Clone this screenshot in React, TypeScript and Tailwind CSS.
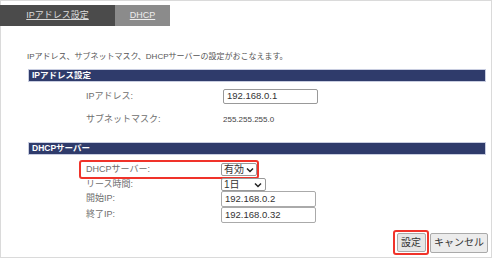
import React from 'react';

const Chevron: React.FC = () => (
  <svg width="8" height="6" viewBox="0 0 8 6" className="shrink-0">
    <path d="M1 1.5 L4 4.5 L7 1.5" fill="none" stroke="#222" strokeWidth="1.5" />
  </svg>
);

const SectionBar: React.FC<{ title: string }> = ({ title }) => (
  <div className="ml-[27px] w-[458px] h-[13px] bg-[#2f3b6b] border border-[#c8cde0] flex items-center pl-[3px] text-white text-[8.5px] font-bold leading-none">
    {title}
  </div>
);

const App: React.FC = () => {
  return (
    <div className="w-[500px] h-[259px] bg-white text-[#6e6e6e] font-['Liberation_Sans','Noto_Sans_CJK_JP',sans-serif] overflow-hidden">
      <div className="w-[492px] h-[258px] border border-[#dadada] pt-[4px]">
        {/* tabs */}
        <div className="flex h-[21px] -ml-px">
          <div className="w-[115px] bg-[#4b4b4b] flex items-center justify-center text-[#dcdcdc] text-[9px] underline">
            IPアドレス設定
          </div>
          <div className="w-[55px] bg-[#8b8b8b] flex items-center justify-center text-[#eee] text-[9px] underline">
            DHCP
          </div>
        </div>

        <p className="mt-[25px] ml-[26px] text-[8px] leading-[12px] text-[#555]">
          IPアドレス、サブネットマスク、DHCPサーバーの設定がおこなえます。
        </p>

        <div className="mt-[6px]">
          <SectionBar title="IPアドレス設定" />
        </div>

        <div className="mt-[7px] ml-[85px] flex items-center h-[15px]">
          <span className="w-[137px] text-[9px]">IPアドレス:</span>
          <div className="w-[95px] h-[15px] border border-[#999] rounded-[2px] flex items-center pl-[3px] text-[9.5px] text-[#333]">
            192.168.0.1
          </div>
        </div>

        <div className="mt-[9px] ml-[85px] flex items-center h-[14px]">
          <span className="w-[137px] text-[9px]">サブネットマスク:</span>
          <span className="text-[8px] text-[#444]">255.255.255.0</span>
        </div>

        <div className="mt-[15px]">
          <SectionBar title="DHCPサーバー" />
        </div>

        <div className="mt-[5px] ml-[78px] w-[180px] h-[19px] border-2 border-[#f0332a] rounded-[3px] flex items-center pl-[5px]">
          <span className="w-[135px] text-[9px]">DHCPサーバー:</span>
          <div className="w-[36px] h-[13px] border border-[#999] rounded-[2px] flex items-center justify-between px-[2px] text-[10px] text-[#333]">
            <span>有効</span>
            <Chevron />
          </div>
        </div>

        <div className="-mt-[1px] ml-[85px] flex items-center h-[13px]">
          <span className="w-[135px] text-[9px]">リース時間:</span>
          <div className="w-[45px] h-[13px] border border-[#999] rounded-[2px] flex items-center justify-between pl-[2px] pr-[3px] text-[10px] text-[#333]">
            <span>1日</span>
            <Chevron />
          </div>
        </div>

        <div className="ml-[85px] flex items-center h-[16px]">
          <span className="w-[135px] text-[9px]">開始IP:</span>
          <div className="w-[95px] h-[16px] border border-[#aaa] rounded-[2px] flex items-center pl-[3px] text-[9.5px] text-[#333]">
            192.168.0.2
          </div>
        </div>

        <div className="ml-[85px] flex items-center h-[16px]">
          <span className="w-[135px] text-[9px]">終了IP:</span>
          <div className="w-[95px] h-[16px] border border-[#aaa] rounded-[2px] flex items-center pl-[3px] text-[9.5px] text-[#333]">
            192.168.0.32
          </div>
        </div>

        <div className="mt-[7px] flex justify-end items-center pr-[3px]">
          <div className="w-[36px] h-[25px] border-2 border-[#f0332a] rounded-[3px] flex items-center justify-center">
            <div className="w-[29px] h-[19px] bg-[#e6e6e6] border border-[#aaa] rounded-[2px] flex items-center justify-center text-[10px] text-[#333]">
              設定
            </div>
          </div>
          <div className="ml-px w-[58px] h-[20px] bg-[#ececec] border border-[#aaa] rounded-[2px] flex items-center justify-center text-[10px] text-[#333]">
            キャンセル
          </div>
        </div>
      </div>
    </div>
  );
};

export default App;
